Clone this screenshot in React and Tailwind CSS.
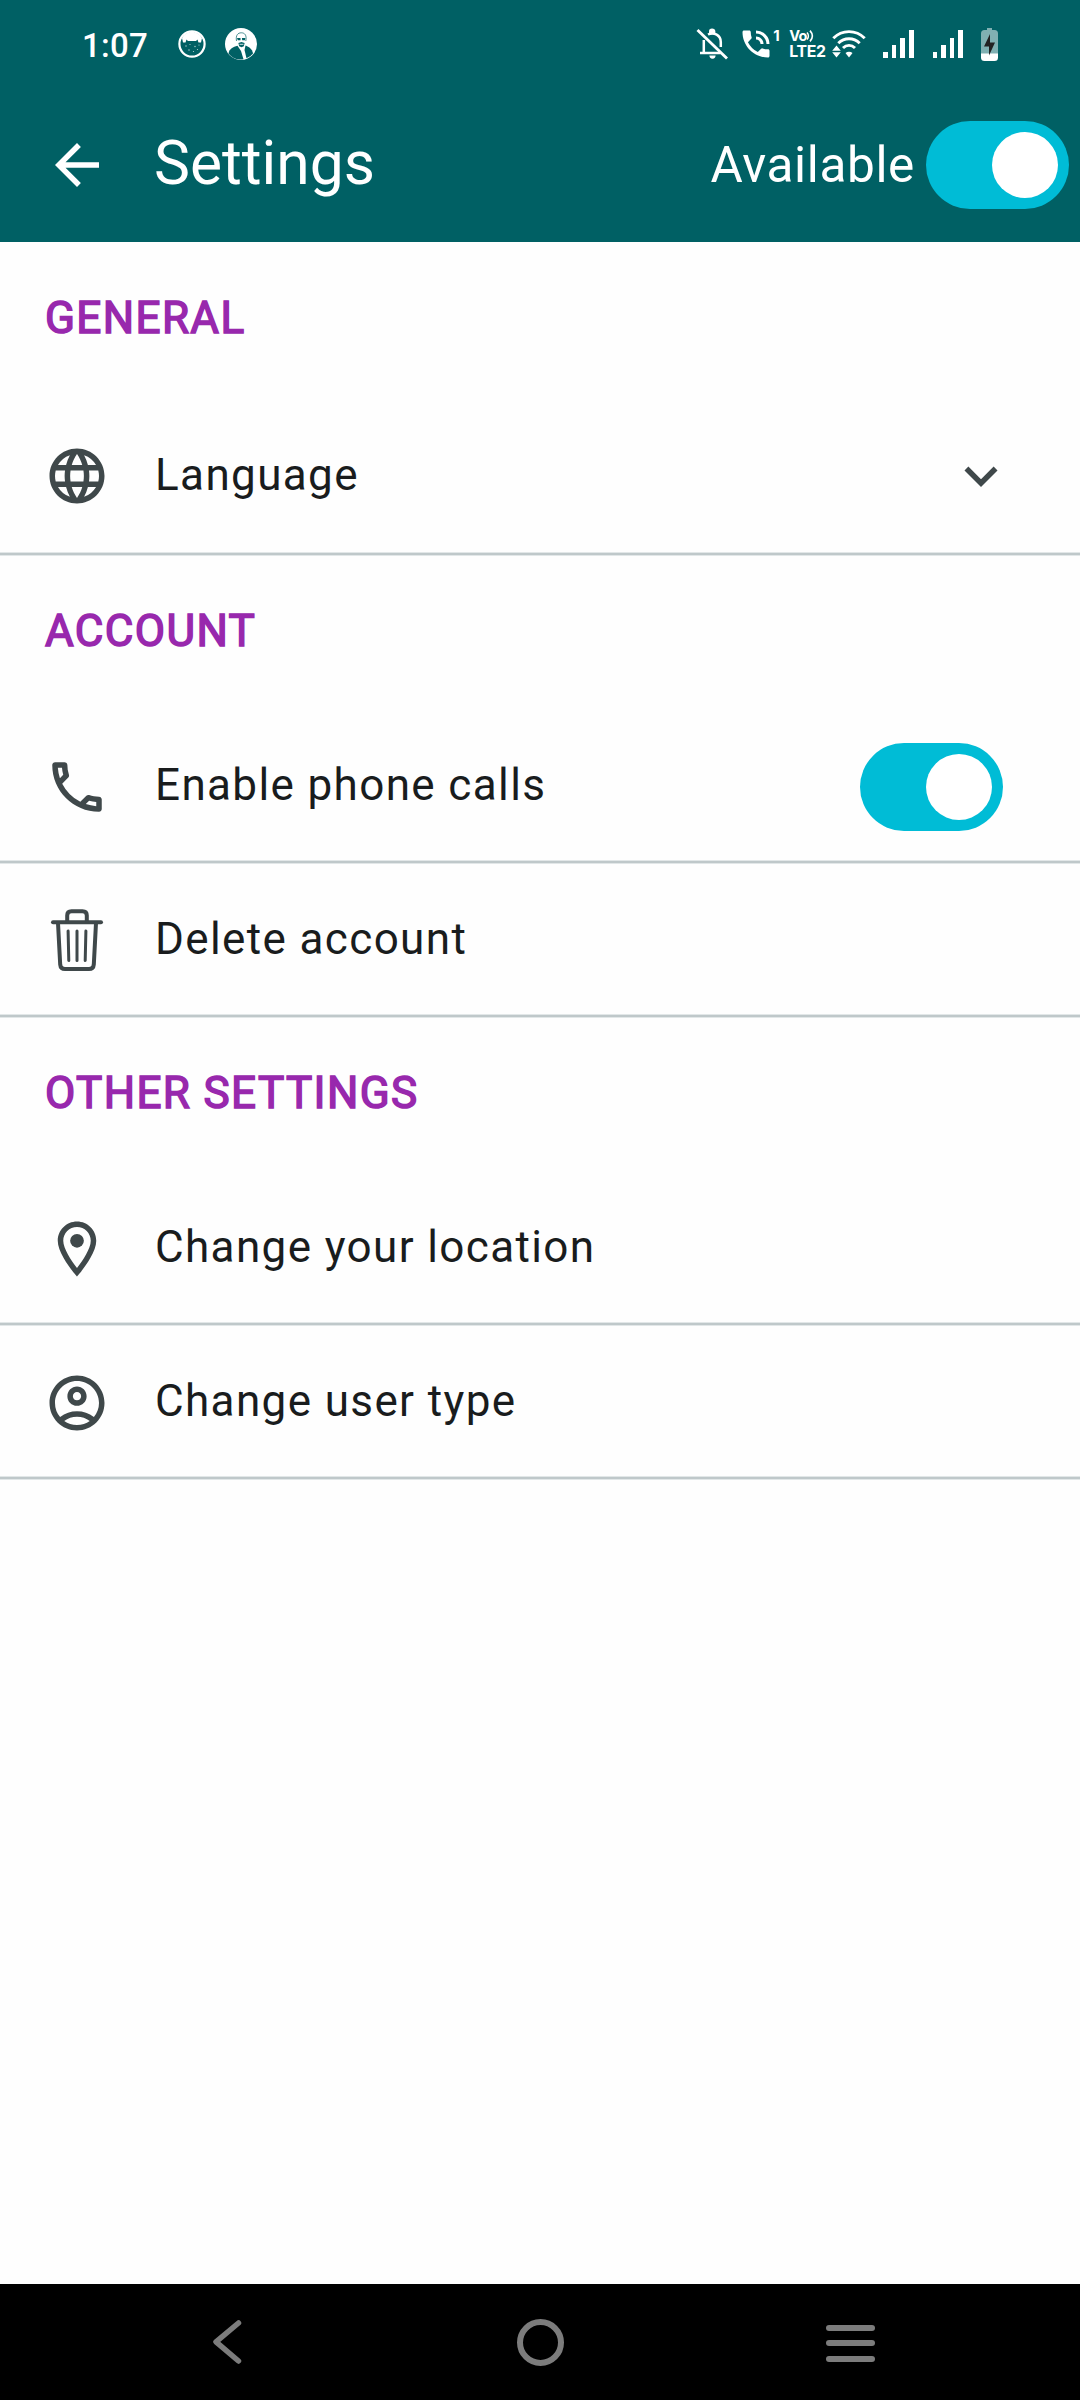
import React from "react";
import {
  MdLanguage,
  MdExpandMore,
  MdOutlineCall,
  MdOutlineLocationOn,
  MdOutlineAccountCircle,
  MdArrowBack,
  MdPhoneInTalk,
} from "react-icons/md";

function CatIcon() {
  return (
    <svg viewBox="0 0 28 28" className="h-7 w-7">
      <circle cx="14" cy="14" r="12.600" fill="none" stroke="#fff" strokeWidth="2.200" />
      <path d="M4 8C6 4.500 9.500 2 14 2S22 4.500 24 8L23 12.500 20.500 12.500 19.500 9.500 18 11H10L8.500 9.500 7.500 12.500H5Z" fill="#fff" />
      <g fill="#b5d3d4">
        <circle cx="8" cy="16" r=".7" />
        <circle cx="12" cy="14.500" r=".6" />
        <circle cx="17" cy="16.500" r=".7" />
        <circle cx="21" cy="15" r=".6" />
        <circle cx="11" cy="20" r=".7" />
        <circle cx="15.500" cy="21.500" r=".6" />
        <circle cx="19.500" cy="19.500" r=".6" />
      </g>
    </svg>
  );
}

function PersonIcon() {
  return (
    <svg viewBox="0 0 32 32" className="h-8 w-8">
      <circle cx="16" cy="16" r="16" fill="#fff" />
      <g fill="#006064">
        <path d="M3.500 25.500C4.500 20.500 8 19 12.500 17.800L16 23 18.500 31.300A15.300 15.300 0 0 1 3.500 25.500Z" />
        <path d="M20.500 17.500C24 19 27 20.500 28 25.500A15.300 15.300 0 0 1 21.500 30.300L19.500 22Z" />
        <path d="M12 10H15.500V12.200H12.800ZM16.900 10H20.400L19.900 12.200H17.200Z" />
        <path d="M13.400 15 16.500 14 19.600 15 18.800 18.200 16.500 19.300 14.200 18.200Z" />
      </g>
      <path d="M11.500 13C10.500 7 13 4.800 16.300 4.800S22 7 20.800 13" fill="none" stroke="#006064" strokeWidth=".7" />
      <path d="M14.500 16.300H18.500" stroke="#fff" strokeWidth=".8" />
    </svg>
  );
}

function BellOffIcon() {
  return (
    <svg viewBox="0 0 32 32" className="h-8 w-8" fill="none" stroke="#fff" strokeWidth="2.500">
      <path d="M1.500 2 31 30.500" strokeWidth="2.800" />
      <path d="M12 6.500C18 3.500 24.800 7.500 24.800 14V19" />
      <path d="M7.800 12V24.700M4 25H24.500" />
      <path d="M13 6.200V3.300C13 1.500 14 .6 16 .6S19.300 1.500 19.300 3.300V6.200Z" fill="#fff" stroke="none" />
      <path d="M13.400 27.600H19.600A3.100 3.100 0 0 1 13.400 27.600Z" fill="#fff" stroke="none" />
    </svg>
  );
}

function CallIcon() {
  return (
    <div className="flex items-start text-white">
      <MdPhoneInTalk className="-m-1 h-9 w-9" />
      <span className="-mt-0.5 ml-[3px] w-[9px] font-['Inter'] text-[15px] leading-4 font-bold">1</span>
    </div>
  );
}

function VolteIcon() {
  return (
    <div className="flex w-[37px] flex-col pt-0.5 font-['Inter'] font-bold text-white">
      <div className="flex h-3 items-center">
        <span className="text-[14.500px] leading-3 tracking-[-0.8px]">Vo</span>
        <svg viewBox="0 0 8 12" className="h-3 w-2" fill="none" stroke="#fff" strokeWidth="1.600">
          <path d="M1 2.500C2.800 4.500 2.800 7.500 1 9.500M4 .6C7 4 7 8 4 11.400" />
        </svg>
      </div>
      <span className="mt-px text-[15.800px] leading-[17px] tracking-[-0.300px]">LTE2</span>
    </div>
  );
}

function WifiIcon() {
  return (
    <svg viewBox="0 0 34 28" className="h-7 w-[34px]" fill="none" stroke="#fff" strokeWidth="2.900">
      <path d="M1.300 8.300C10 -.6 24 -.6 32.700 8.300" />
      <path d="M6.300 13.300C12.300 7.300 21.700 7.300 27.700 13.300" />
      <path d="M11 18C14.500 14.500 19.500 14.500 23 18" />
      <g fill="#fff" stroke="none">
        <path d="M13.500 23C15.500 21.200 18.500 21.200 20.500 23L17 27.500Z" />
        <path d="M4.500 15.500 8.800 20.800H.2ZM.2 22.300H8.800L4.500 27.600Z" />
      </g>
    </svg>
  );
}

function SignalIcon() {
  return (
    <div className="flex h-7 items-end gap-1">
      <span className="h-1.5 w-[4.600px] bg-white" />
      <span className="h-[13px] w-[4.600px] bg-white" />
      <span className="h-[20px] w-[4.600px] bg-white" />
      <span className="h-7 w-[4.600px] bg-white" />
    </div>
  );
}

function BatteryIcon() {
  return (
    <svg viewBox="0 0 17 33" className="h-[33px] w-[17px]">
      <path d="M6 0H11V2H13.500A3.500 3.500 0 0 1 17 5.500V26H0V5.500A3.500 3.500 0 0 1 3.500 2H6Z" fill="#80b0b2" />
      <path d="M0 25.500H17V29.500A3.500 3.500 0 0 1 13.500 33H3.500A3.500 3.500 0 0 1 0 29.500Z" fill="#fff" />
      <path d="M9 6V14.500H14L8 27.500V18.500H3Z" fill="#222" />
    </svg>
  );
}

function StatusBar() {
  return (
    <div className="flex h-[88px] items-center pr-[82px] pl-[82px]">
      <span className="mt-[3px] w-[96px] text-[33px] leading-10 font-medium tracking-[0.300px] text-white">1:07</span>
      <CatIcon />
      <div className="ml-[19px]">
        <PersonIcon />
      </div>
      <div className="ml-auto flex items-center">
        <BellOffIcon />
        <div className="ml-[14px]"><CallIcon /></div>
        <div className="ml-[7px]"><VolteIcon /></div>
        <div className="ml-[6px]"><WifiIcon /></div>
        <div className="ml-[17px]"><SignalIcon /></div>
        <div className="ml-[19px]"><SignalIcon /></div>
        <div className="ml-[18px]"><BatteryIcon /></div>
      </div>
    </div>
  );
}

function Toggle() {
  return (
    <button className="flex h-[88px] w-[143px] shrink-0 items-center justify-end rounded-full bg-[#00bcd6] pr-[11px]">
      <span className="h-[66px] w-[66px] rounded-full bg-white" />
    </button>
  );
}

function TrashIcon() {
  return (
    <svg viewBox="0 0 66 66" className="-mt-px h-[66px] w-[66px]" fill="none" stroke="#3f484a" strokeWidth="4" strokeLinecap="round">
      <path d="M9 15.200H57" />
      <path d="M23.200 14V8.500Q23.200 4.200 27.500 4.200H38.500Q42.800 4.200 42.800 8.500V14" />
      <path d="M14 16 16.200 57.500Q16.600 62 21 62H45Q49.400 62 49.800 57.500L52 16" />
      <path d="M24.100 24 24.800 53.500M33 24V53.500M41.900 24 41.200 53.500" strokeWidth="3" />
    </svg>
  );
}

function Divider() {
  return <div className="h-1 border-y border-[#e2e7e8] bg-[#bfc8ca]" />;
}

function SectionTitle({ children, first }) {
  return (
    <h2 className={first ? "flex h-[154px] items-center pb-[3px] pl-[45px]" : "flex h-[154px] items-center pb-[5px] pl-[45px]"}>
      <span className="text-[44px] font-normal tracking-[1.375px] text-[#9828ad] [-webkit-text-stroke:1.500px_#9828ad]">
        {children}
      </span>
    </h2>
  );
}

function Row({ icon, label, trailing, tall }) {
  return (
    <div>
      <div className={tall ? "flex h-[156px] items-center pr-[66px] pl-11" : "flex h-[150px] items-center pr-[77px] pl-11"}>
        <div className="mt-1 h-[66px] w-[66px] text-[66px] text-[#3f484a]">{icon}</div>
        <span className={tall ? "mt-0.5 ml-[45px] grow text-[44px] tracking-[1.375px]" : "ml-[45px] grow text-[44px] tracking-[1.375px]"}>
          {label}
        </span>
        {trailing && <div className="mt-1">{trailing}</div>}
      </div>
      <Divider />
    </div>
  );
}

function NavBar() {
  return (
    <nav className="flex h-[116px] items-center bg-black pl-[211px]">
      <svg viewBox="0 0 32 46" className="h-[46px] w-8" fill="none" stroke="#7c7c7c" strokeWidth="5.500" strokeLinecap="round" strokeLinejoin="round">
        <path d="M27.500 4 5 22.800 27.500 42" />
      </svg>
      <span className="ml-[274px] h-[47px] w-[47px] rounded-full border-6 border-[#7c7c7c]" />
      <span className="ml-[262px] flex w-[49px] flex-col gap-[9.500px] pt-0.5">
        <span className="h-1.5 rounded-full bg-[#7c7c7c]" />
        <span className="h-1.5 rounded-full bg-[#7c7c7c]" />
        <span className="h-1.5 rounded-full bg-[#7c7c7c]" />
      </span>
    </nav>
  );
}

export default function App() {
  return (
    <div className="flex h-[2400px] w-[1080px] flex-col overflow-hidden bg-[#fefefe] font-[Roboto,sans-serif] text-[#191c1d]">
      <header className="h-[242px] bg-[#006064] text-white">
        <StatusBar />
        <div className="flex h-[154px] items-center pr-[11px] pl-11">
          <MdArrowBack className="h-[66px] w-[66px]" />
          <h1 className="ml-11 grow pb-px text-[60.500px]">Settings</h1>
          <span className="mr-[11px] text-[49.500px] tracking-[0.650px]">Available</span>
          <Toggle />
        </div>
      </header>
      <main className="flex grow flex-col">
        <SectionTitle first>GENERAL</SectionTitle>
        <Row tall icon={<MdLanguage />} label="Language" trailing={<MdExpandMore className="h-[66px] w-[66px] text-[#3f484a]" />} />
        <SectionTitle>ACCOUNT</SectionTitle>
        <Row icon={<MdOutlineCall />} label="Enable phone calls" trailing={<Toggle />} />
        <Row icon={<TrashIcon />} label="Delete account" />
        <SectionTitle>OTHER SETTINGS</SectionTitle>
        <Row icon={<MdOutlineLocationOn />} label="Change your location" />
        <Row icon={<MdOutlineAccountCircle />} label="Change user type" />
      </main>
      <NavBar />
    </div>
  );
}
